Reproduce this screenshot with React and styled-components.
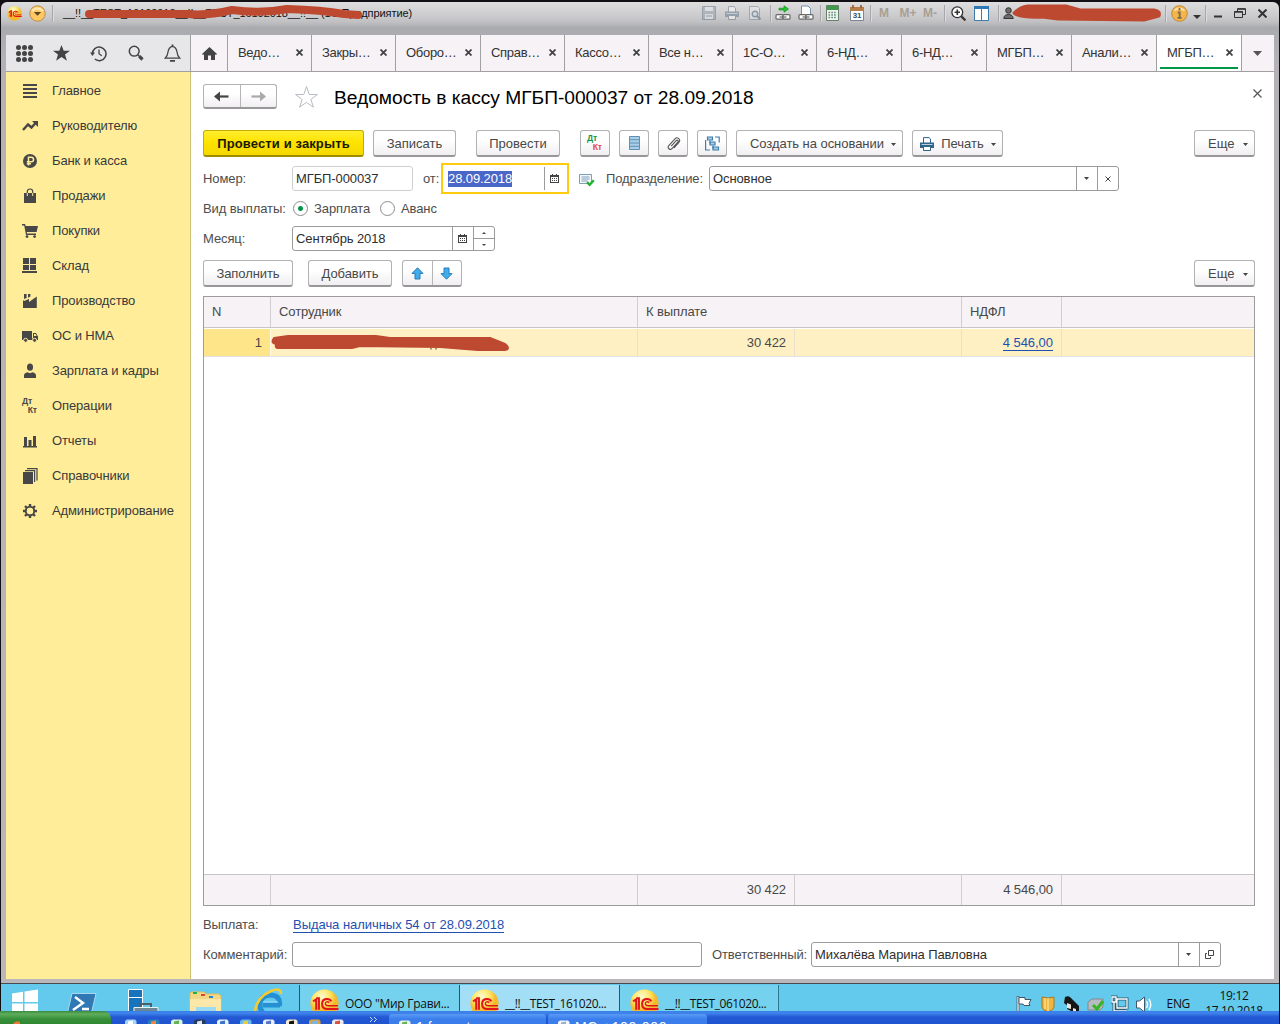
import React from 'react';
import styled, { createGlobalStyle, css } from 'styled-components';

const Global = createGlobalStyle`
  * { box-sizing: border-box; }
  html, body { margin: 0; padding: 0; background: #000; overflow: hidden; }
  body { font: 13px/16px "Liberation Sans", Arial, sans-serif; letter-spacing: -0.1px; color: #404040; }
  svg { display: block; flex: none; }
`;

const Screen = styled.div`
  width: 1280px;
  height: 1024px;
  padding: 2px 1px 0 1px;
  display: flex;
  flex-direction: column;
  overflow: hidden;
  background: #121014;
`;

const Window = styled.div`
  height: 982px;
  flex: none;
  padding: 0 5px 4px 5px;
  display: flex;
  flex-direction: column;
  border-radius: 6px 6px 0 0;
  background: linear-gradient(180deg, #dededf 0, #cbcbcd 14px, #c0c0c3 20px, #a9aaad 26px, #acadb1 33px, #b4b2b6 60px, #b9b7ba 100%);
  border-bottom: 1px solid #4a4a4e;
`;

const TitleBar = styled.header`
  position: relative;
  height: 33px;
  flex: none;
  display: flex;
  align-items: flex-start;
  font-size: 11px;
  letter-spacing: -0.07px;
  color: #111;
`;

const TitleText = styled.span`
  width: 634px;
  margin-left: 10px;
  padding-top: 3px;
  flex: none;
  white-space: pre;
`;

const TitleGroup = styled.div`
  height: 22px;
  display: flex;
  align-items: center;
`;

const Slot = styled.span`
  width: ${p => p.$w}px;
  height: 22px;
  flex: none;
  display: flex;
  align-items: center;
  justify-content: center;
  opacity: ${p => (p.$dim ? 0.5 : 1)};
  font: bold 12px "Liberation Sans", Arial, sans-serif;
  color: #a89f94;
`;

const Sep = styled.i`
  width: 1px;
  height: 17px;
  flex: none;
  background: #a7a7ab;
  box-shadow: 1px 0 0 #dcdcde;
`;

const Scribble = styled.svg`
  position: absolute;
  left: ${p => p.$x}px;
  top: ${p => p.$y}px;
  pointer-events: none;
`;

const Panel = styled.div`
  flex: 1;
  min-height: 0;
  display: flex;
  flex-direction: column;
  background: #fff;
`;

const TopBar = styled.nav`
  height: 37px;
  flex: none;
  display: flex;
  background: #f6f2f6;
  border-bottom: 1px solid #a0a0a0;
`;

const Tools = styled.div`
  width: 185px;
  flex: none;
  display: flex;
  align-items: center;
  background: #e7e7e9;
  border-right: 1px solid #a0a0a0;
`;

const Tool = styled.span`
  width: 37px;
  flex: none;
  display: flex;
  justify-content: center;
`;

const HomeTab = styled.div`
  width: 36px;
  flex: none;
  display: flex;
  align-items: center;
  justify-content: center;
`;

const Tab = styled.div`
  width: ${p => p.$w}px;
  flex: none;
  padding: 0 8px 1px 10px;
  display: flex;
  align-items: center;
  justify-content: space-between;
  border-left: 1px solid #a0a0a0;
  letter-spacing: -0.3px;
  color: #333;
  ${p => p.$active && css`
    background: linear-gradient(#009646, #009646) 3px 32px / 78px 2px no-repeat #fff;
  `}
`;

const MoreTabs = styled.div`
  flex: 1;
  padding-right: 2px;
  display: flex;
  align-items: center;
  justify-content: center;
  border-left: 1px solid #a0a0a0;
`;

const Body = styled.div`
  flex: 1;
  min-height: 0;
  display: flex;
`;

const Sidebar = styled.aside`
  width: 185px;
  flex: none;
  padding-top: 1px;
  background: #ffed9a;
  border-right: 1px solid #cdc178;
`;

const NavItem = styled.div`
  height: 35px;
  padding-left: 14px;
  display: grid;
  grid-template-columns: 20px 1fr;
  column-gap: 12px;
  align-items: center;
  justify-items: start;
  letter-spacing: -0.13px;
  color: #3a3a3a;
  white-space: nowrap;
  svg { justify-self: center; }
`;

const Page = styled.main`
  flex: 1;
  padding: 12px 19px 0 12px;
  display: flex;
  flex-direction: column;
`;

const HeadRow = styled.div`
  height: 25px;
  flex: none;
  display: flex;
  align-items: center;
`;

const StarButton = styled.span`
  margin-left: 17px;
`;

const Title = styled.h1`
  flex: 1;
  margin: 0 0 0 15px;
  padding-top: 2px;
  font-size: 19.2px;
  line-height: 24px;
  font-weight: 400;
  letter-spacing: -0.02px;
  color: #000;
`;

const CloseBox = styled.span`
  margin: -6px -7px 0 0;
`;

const Row = styled.div`
  height: ${p => p.$h}px;
  margin-top: ${p => p.$mt || 0}px;
  flex: none;
  display: flex;
  align-items: center;
`;

const raised = css`
  border: 1px solid #b2b2b2;
  border-bottom: 2px solid #979797;
  border-radius: 3px;
  background: linear-gradient(#fff 40%, #f1eef1);
`;

const Button = styled.button`
  ${raised}
  width: ${p => p.$w}px;
  height: 27px;
  margin: 0 0 0 ${p => p.$ml || 0}px;
  padding: ${p => (p.$menu ? `2px 6px 0 ${p.$pl || 13}px` : p.$icon ? '0' : '2px 0 0')};
  flex: none;
  display: flex;
  align-items: center;
  justify-content: ${p => (p.$menu ? 'space-between' : 'center')};
  font: 13px/16px "Liberation Sans", Arial, sans-serif;
  letter-spacing: ${p => p.$ls || 0}px;
  color: #484848;
  white-space: nowrap;
  ${p => p.$primary && css`
    font-weight: 700;
    letter-spacing: 0.12px;
    color: #1a1a00;
    border-color: #c3ab00;
    border-bottom-color: #a08c00;
    background: linear-gradient(#ffee30, #ffe300 45%, #f5d800);
  `}
`;

const Pair = styled.div`
  ${raised}
  width: ${p => p.$w}px;
  height: ${p => p.$h}px;
  margin-left: ${p => p.$ml || 0}px;
  flex: none;
  display: flex;
`;

const Half = styled.span`
  flex: 1;
  display: flex;
  align-items: center;
  justify-content: center;
  & + & { border-left: 1px solid #b5b5b5; }
`;

const Spacer = styled.span`
  flex: 1;
`;

const Label = styled.label`
  width: ${p => p.$w}px;
  margin-left: ${p => p.$ml || 0}px;
  flex: none;
  white-space: nowrap;
  color: #4d4d4d;
`;

const Field = styled.div`
  width: ${p => p.$w}px;
  height: 25px;
  flex: none;
  display: flex;
  align-items: stretch;
  border: 1px solid ${p => (p.$soft ? '#cfcfcf' : '#9b9b9b')};
  border-radius: 3px;
  background: #fff;
  color: #2e2e2e;
`;

const Value = styled.span`
  flex: 1;
  padding: 0 3px;
  display: flex;
  align-items: center;
  white-space: nowrap;
`;

const FieldBtn = styled.span`
  width: ${p => p.$w || 21}px;
  padding-right: 1px;
  display: flex;
  align-items: center;
  justify-content: center;
  border-left: 1px solid #9b9b9b;
`;

const Spin = styled.span`
  width: 21px;
  display: flex;
  flex-direction: column;
  border-left: 1px solid #9b9b9b;
`;

const SpinHalf = styled.span`
  flex: 1;
  display: flex;
  align-items: center;
  justify-content: center;
  & + & { border-top: 1px solid #9b9b9b; }
`;

const FocusField = styled.div`
  width: 128px;
  height: 31px;
  flex: none;
  padding: 2px 3px 2px 5px;
  display: flex;
  align-items: stretch;
  border: 2px solid #ffcb0f;
  background: #fff;
`;

const Selected = styled.span`
  height: 16px;
  margin-top: 4px;
  line-height: 15px;
  background: #4a67c8;
  color: #fff;
  letter-spacing: -0.1px;
`;

const Status = styled.span`
  margin: 2px 11px 0 10px;
`;

const Radio = styled.span`
  width: 15px;
  height: 15px;
  margin-right: 6px;
  flex: none;
  border: 1px solid #8c8c8c;
  border-radius: 50%;
  background: ${p => (p.$on ? 'radial-gradient(circle, #009646 2px, #fff 3px)' : '#fff')};
`;

const Table = styled.section`
  position: relative;
  height: 610px;
  margin-top: 9px;
  flex: none;
  display: flex;
  flex-direction: column;
  border: 1px solid #9c9c9c;
  background: #fff;
`;

const TRow = styled.div`
  height: ${p => p.$h}px;
  flex: none;
  display: grid;
  grid-template-columns: ${p => (p.$kind === 'head' ? '67px 367px 324px 100px 1fr' : '67px 367px 157px 167px 100px 1fr')};
  ${p => p.$kind === 'head' && css`background: #f6f2f6; border-bottom: 1px solid #c6c6c6;`}
  ${p => p.$kind === 'row' && css`background: #fff0c4; border-top: 1px solid #fff; border-bottom: 1px solid #e2e2e4;`}
  ${p => p.$kind === 'foot' && css`background: #f6f2f6; border-top: 1px solid #c6c6c6;`}
`;

const Cell = styled.div`
  padding: 0 8px;
  display: flex;
  align-items: center;
  justify-content: ${p => (p.$right ? 'flex-end' : 'flex-start')};
  border-right: 1px solid ${p => (p.$tone || '#d0ced0')};
  background: ${p => p.$bg || 'transparent'};
  color: #484848;
  &:last-child { border-right: 0; }
`;

const Link = styled.a`
  margin-top: ${p => p.$mt || 0}px;
  color: #1d50b0;
  border-bottom: 1px solid #1d50b0;
  line-height: 14px;
  letter-spacing: -0.04px;
  white-space: nowrap;
`;

const WinBar = styled.footer`
  height: 27px;
  flex: none;
  padding-top: 1px;
  display: flex;
  overflow: hidden;
  background: #63caee;
`;

const Pinned = styled.div`
  width: 298px;
  flex: none;
  display: flex;
`;

const Pin = styled.span`
  width: ${p => p.$w}px;
  height: 26px;
  overflow: hidden;
`;

const Task = styled.div`
  width: 160px;
  height: 26px;
  flex: none;
  padding: 4px 0 0 10px;
  display: flex;
  align-items: flex-start;
  overflow: hidden;
  border-left: 1px solid #24586a;
  background: ${p => (p.$active ? '#a2dff7' : '#74d2ee')};
  color: #111;
  font: 12px/30px "Open Sans", "Noto Sans", sans-serif;
  letter-spacing: ${p => p.$ls || 0}px;
  white-space: nowrap;
  span { margin-left: 6px; }
  &:last-of-type { border-right: 1px solid #2d7890; }
`;

const Tasks = styled.div`
  display: flex;
`;

const Tray = styled.div`
  margin-left: auto;
  padding: 10px 0 0 0;
  display: flex;
  align-items: flex-start;
  gap: 6px;
  color: #111;
  font: 12px/16px "Open Sans", "Noto Sans", sans-serif;
  letter-spacing: -0.35px;
`;

const Lang = styled.span`
  margin: 1px -1px 0 8px;
`;

const Clock = styled.div`
  width: 90px;
  margin: -7px 0 0 -6px;
  line-height: 15px;
  text-align: center;
`;

const XpBar = styled.footer`
  height: 13px;
  flex: none;
  margin-left: -1px;
  display: flex;
  overflow: hidden;
  background: linear-gradient(#3a7ce8 0, #3f86ec 2px, #2459d4 6px, #1f53cf 13px);
`;

const Start = styled.div`
  width: 111px;
  height: 13px;
  padding: 9px 0 0 12px;
  border-radius: 0 8px 0 0;
  background: linear-gradient(#3b8a3e, #5fae5c 3px, #378f39 8px, #2f8732);
`;

const Quick = styled.div`
  width: 278px;
  padding-left: 13px;
  display: flex;
  gap: 10px;
`;

const More = styled.span`
  margin: 5px 0 0 15px;
`;

const XpTask = styled.div`
  width: ${p => p.$w}px;
  margin: 3px 2px 0 0;
  padding: 5px 0 0 9px;
  display: flex;
  gap: 5px;
  border-radius: 3px 3px 0 0;
  background: linear-gradient(#5a9bf5, #3b7eeb 5px);
  color: #fff;
  font: 14px/16px "Liberation Sans", Arial, sans-serif;
  letter-spacing: ${p => p.$ls || 0}px;
  white-space: pre;
  overflow: hidden;
  svg { margin-top: -7px; }
`;

const RED = '#bd4930';
const INK = '#474747';

const Cross = ({ s = 7, w = 2, c = '#444' }) => (
  <svg width={s} height={s} viewBox={`0 0 ${s} ${s}`} stroke={c} strokeWidth={w}>
    <path d={`M.5 .5L${s - 0.5} ${s - 0.5}M${s - 0.5} .5L.5 ${s - 0.5}`} />
  </svg>
);

const Caret = ({ w = 5, h = 3, up, c = '#444' }) => (
  <svg width={w} height={h} viewBox="0 0 6 3" preserveAspectRatio="none" fill={c}>
    <path d={up ? 'M0 3L3 0L6 3Z' : 'M0 0L3 3L6 0Z'} />
  </svg>
);

const Arrow = ({ c, flip }) => (
  <svg width="15" height="11" viewBox="0 0 15 11" fill="none" stroke={c} strokeWidth="2.2" transform={flip ? 'scale(-1 1)' : undefined}>
    <path d="M1.5 5.5H14.5" />
    <path d="M0 5.5L6 .5V10.5Z" fill={c} stroke="none" />
  </svg>
);

const Calendar = () => (
  <svg width="9" height="9" viewBox="0 0 9 9" fill="#444">
    <path d="M0 1H9V9H0Z" />
    <path d="M2 0H3V2H2ZM6 0H7V2H6Z" />
    <path fill="#fff" d="M1 3H8V8H1Z" />
    <path d="M2 4H3V5H2ZM4 4H5V5H4ZM6 4H7V5H6ZM2 6H3V7H2ZM4 6H5V7H4ZM6 6H7V7H6Z" />
  </svg>
);

const BlueArrow = ({ down }) => (
  <svg width="13" height="13" viewBox="0 0 13 13" transform={down ? 'rotate(180)' : undefined}>
    <path d="M6.5 .8L12 6.4H9V12H4V6.4H1Z" fill="#42adea" stroke="#257db8" />
  </svg>
);

const OneC = ({ s = 16 }) => (
  <svg width={s} height={s} viewBox="0 0 28 28">
    <defs>
      <radialGradient id="onec" cx="40%" cy="25%">
        <stop offset="0" stopColor="#fffbd0" />
        <stop offset=".6" stopColor="#ffe765" />
        <stop offset="1" stopColor="#f4b92c" />
      </radialGradient>
    </defs>
    <circle cx="14" cy="14" r="13.6" fill="url(#onec)" />
    <g fill="none" stroke="#e0161b" strokeWidth="2">
      <path d="M3 12L6 10V20M8.6 20V9H6" />
      <path d="M20.5 12C19 8.8 12 8.6 11.7 14C11.5 18.3 14 19.3 17 19.3H27.5" />
      <path d="M18.6 13.2C17 11.8 14.9 12.2 14.8 14.1C14.8 16 16 16.2 18 16.2H27" strokeWidth="1.3" />
    </g>
  </svg>
);

const Nav = ({ children }) => (
  <svg width="16" height="16" viewBox="0 0 16 16" fill={INK}>{children}</svg>
);

const DtKt = ({ a, b }) => (
  <svg width="18" height="18" viewBox="0 0 18 18" fontFamily="Liberation Sans, Arial, sans-serif" fontWeight="700" fontSize="8.6" letterSpacing="-.2">
    <text x="1" y="7" fill={a}>Дт</text>
    <text x="6.8" y="16.2" fill={b}>Кт</text>
  </svg>
);

const navItems = [
  ['Главное', <Nav><path d="M1 1h14v2H1zM1 5h14v2H1zM1 9h14v2H1zM1 13h14v2H1z" /></Nav>],
  ['Руководителю', <Nav><path d="M1 12L6 6.5L9.5 9.5L14 4.5" fill="none" stroke={INK} strokeWidth="2.4" /><path d="M10 3h6v6z" /></Nav>],
  ['Банк и касса', <Nav><circle cx="8" cy="8" r="7" /><path d="M6.5 12.5V4.2H9.3a2.2 2.2 0 0 1 0 4.5H4.8M4.8 10.7H9" fill="none" stroke="#ffed9a" strokeWidth="1.5" /></Nav>],
  ['Продажи', <Nav><path d="M2 5h12v10H2z" /><path d="M5.3 8V3.5q0-2.5 2.7-2.5t2.7 2.5V8" fill="none" stroke={INK} strokeWidth="1.2" /><path d="M5.3 5V8M10.7 5V8" stroke="#ffed9a" strokeWidth="1" /></Nav>],
  ['Покупки', <Nav><path d="M0 1h3l.7 2H16l-1.4 6H4.8L5 10.5h9V12H4L2.2 2.4H0z" /><circle cx="5" cy="13.6" r="1.4" /><circle cx="12.6" cy="13.6" r="1.4" /></Nav>],
  ['Склад', <Nav><path d="M1 0h6v6H1zM8 0h6v6H8zM1 7h6v5H1zM8 7h6v5H8zM0 13h15v2H0z" /></Nav>],
  ['Производство', <Nav><path d="M1 15V8l1-1v1l5-2v3l7.8-5.5V15zM2 1h2.6v4L2 6zM6 1h2.4v2.5L6 4.8z" /></Nav>],
  ['ОС и НМА', <Nav><path d="M0 3h10v9H0zM11 5h3l2 3.4V12h-5z" /><path d="M12 6h1.600l1 2H12z" fill="#ffed9a" /><path d="M9 10.500h3V12H9z" /><circle cx="3.600" cy="12.300" r="2" stroke="#ffed9a" /><circle cx="12.600" cy="12.300" r="2" stroke="#ffed9a" /></Nav>],
  ['Зарплата и кадры', <Nav><ellipse cx="8" cy="4.2" rx="3" ry="3.6" /><path d="M2 15v-2.5Q2 10 5.5 9.3L8 10.2L10.5 9.3Q14 10 14 12.5V15z" /></Nav>],
  ['Операции', <DtKt a={INK} b={INK} />],
  ['Отчеты', <Nav><path d="M1 13h14v1.6H1zM2 4h3v10H2zM6.5 7h3v7h-3zM11 3h3v11h-3z" /></Nav>],
  ['Справочники', <Nav><path d="M1 4h10v12H1z" /><path d="M3 2.6h9.6V14M5 .6h10v12" fill="none" stroke={INK} strokeWidth="1.2" /></Nav>],
  ['Администрирование', (
    <Nav>
      <circle cx="8" cy="8" r="4.2" fill="none" stroke={INK} strokeWidth="2" />
      <g stroke={INK} strokeWidth="2.4"><path d="M8 1v3M8 12v3M1 8h3M12 8h3M3 3l2 2M11 11l2 2M13 3l-2 2M5 11l-2 2" /></g>
      <circle cx="8" cy="8" r="3.2" fill="#ffed9a" />
    </Nav>
  )],
];

const tabs = [
  ['Ведо…', 84], ['Закры…', 84], ['Оборо…', 85], ['Справ…', 84], ['Кассо…', 84], ['Все н…', 84],
  ['1С-О…', 84], ['6-НД…', 85], ['6-НД…', 85], ['МГБП…', 85], ['Анали…', 85], ['МГБП…', 85],
];

const Floppy = () => (
  <svg width="14" height="14" viewBox="0 0 14 14"><path d="M.5.5h13v13H.5z" fill="#8c9aa8" stroke="#5d7184" /><path d="M3 1h8v4H3zM3 8h8v5H3z" fill="#e4e8ec" /><path d="M4 10h6" stroke="#5d7184" /></svg>
);
const Printer = ({ c = '#5f7386', s = 14 }) => (
  <svg width={s} height={s} viewBox="0 0 14 14"><path d="M3.5 6V.6H9L10.5 2V6" fill="#fff" stroke={c} /><path d="M0 5.5h14v5.5H0z" fill={c} /><path d="M1.5 7.5h11" stroke="#b8d0e0" /><path d="M3.5 9.5h7v4h-7z" fill="#fff" stroke={c} /></svg>
);
const Preview = () => (
  <svg width="14" height="14" viewBox="0 0 14 14"><path d="M1.5.5h8l2 2v11h-10z" fill="#e8ecef" stroke="#71808e" /><circle cx="7" cy="8" r="2.8" fill="#cfe2ee" stroke="#4f6172" strokeWidth="1.4" /><path d="M9 10l3.5 3.5" stroke="#4f6172" strokeWidth="2" /></svg>
);
const Chain = ({ page }) => (
  <svg width="16" height="16" viewBox="0 0 16 16">
    {page
      ? <path d="M3.5 9V1H10l2.5 2.5V9" fill="#fff" stroke="#7590a8" />
      : <path d="M4 3.2h5V.8L13.5 4L9 7.2V5H4z" fill="#25c631" stroke="#128a1e" strokeWidth=".7" />}
    <g fill="#fff" stroke="#666" strokeWidth="1.2"><rect x="1" y="9.600" width="7" height="4.600" rx="1" /><rect x="8" y="9.600" width="7" height="4.600" rx="1" /><path d="M4.500 12h7" /></g>
  </svg>
);
const Calc = () => (
  <svg width="13" height="16" viewBox="0 0 13 16"><path d="M.5.5h12v15H.5z" fill="#f1f5f1" stroke="#66806a" /><path d="M1 1h11v4H1z" fill="#3f9a49" /><path d="M2.5 7.5h8.5M2.5 10h8.5M2.5 12.5h8.5" stroke="#5f8a78" strokeWidth="1.3" strokeDasharray="1.6 1.2" /></svg>
);
const Cal31 = () => (
  <svg width="14" height="16" viewBox="0 0 14 16"><path d="M.5 2.5h13v13H.5z" fill="#fff" stroke="#7b8792" /><path d="M0 2h14v4H0z" fill="#b67c4a" /><path d="M3 0v3M11 0v3" stroke="#8b5a33" strokeWidth="1.6" /><text x="2.8" y="13.4" fontSize="8" fontFamily="Liberation Sans, sans-serif" fontWeight="700" fill="#35506b" letterSpacing="-.3">31</text></svg>
);
const Magnify = () => (
  <svg width="15" height="15" viewBox="0 0 15 15" fill="none" stroke="#333"><circle cx="6.3" cy="6.3" r="5.4" fill="#fff" strokeWidth="1.3" /><path d="M3.6 6.3h5.4M6.3 3.6v5.4" strokeWidth="1.6" /><path d="M10.4 10.4l4 4" strokeWidth="2.2" /></svg>
);
const Columns = () => (
  <svg width="15" height="15" viewBox="0 0 15 15"><path d="M.5.5h14v14H.5z" fill="#fff" stroke="#417ba8" /><path d="M0 0h15v3H0z" fill="#2e78b6" /><path d="M7.5 2v12" stroke="#417ba8" /></svg>
);

const TitleIcons = () => (
  <TitleGroup>
    <Slot $w={23} $dim><Floppy /></Slot>
    <Slot $w={23} $dim><Printer /></Slot>
    <Slot $w={23} $dim><Preview /></Slot>
    <Slot $w={4} />
    <Sep />
    <Slot $w={24}><Chain /></Slot>
    <Slot $w={22}><Chain page /></Slot>
    <Slot $w={3} />
    <Sep />
    <Slot $w={22}><Calc /></Slot>
    <Slot $w={27}><Cal31 /></Slot>
    <Sep />
    <Slot $w={26}>M</Slot>
    <Slot $w={22}>M+</Slot>
    <Slot $w={22}>M-</Slot>
    <Slot $w={3} />
    <Sep />
    <Slot $w={26}><Magnify /></Slot>
    <Slot $w={21}><Columns /></Slot>
    <Slot $w={6} />
    <Sep />
    <Slot $w={18}>
      <svg width="11" height="13" viewBox="0 0 11 13" fill="#6b6b6b" stroke="#333"><circle cx="5.5" cy="3.5" r="2.8" /><path d="M.8 11.5Q1 7.5 5.5 7.5T10.2 11.5Z" /></svg>
    </Slot>
    <Slot $w={148} />
    <Sep />
    <Slot $w={26}>
      <svg width="17" height="17" viewBox="0 0 17 17"><circle cx="8.5" cy="8.5" r="7.8" fill="#f5b548" stroke="#c08a35" /><path d="M3.500 5.500Q8 1.500 13.500 5.500" stroke="#ffe2a6" strokeWidth="2" fill="none" /><path d="M8.500 3v2.200M6.800 7.500h1.900V12.600M6.500 12.800h4.200" stroke="#7b6a5a" strokeWidth="1.800" fill="none" /></svg>
    </Slot>
    <Slot $w={10}><svg width="8" height="12" viewBox="0 0 8 12" fill="#333"><path d="M0 8h8L4 12z" /></svg></Slot>
    <Slot $w={3} />
    <Sep />
    <Slot $w={24}><svg width="8" height="10" viewBox="0 0 8 10"><path d="M0 8.5h8" stroke="#333" strokeWidth="2" /></svg></Slot>
    <Slot $w={20}>
      <svg width="12" height="10" viewBox="0 0 12 10" fill="none" stroke="#333"><path d="M3.5 3V.8H11.5V6.5H9" /><path d="M.5 3.5h8v6h-8z" /><path d="M.5 4h8M3.5 1h8" strokeWidth="1.4" /></svg>
    </Slot>
    <Slot $w={24}><Cross s={9} w={2} c="#333" /></Slot>
  </TitleGroup>
);

const XpIcon = ({ a, b }) => (
  <svg width="13" height="13" viewBox="0 0 13 13"><path d="M1 13V10L3 8.500h8l1.500 1.500v3z" fill={a} /><path d="M4 13v-2.500l5-1V13z" fill={b} /></svg>
);

export default function App() {
  return (
    <Screen>
      <Global />
      <Window>
        <TitleBar>
          <TitleGroup>
            <Slot $w={17}><OneC s={15} /></Slot>
            <Slot $w={29}>
              <svg width="17" height="17" viewBox="0 0 17 17"><circle cx="8.5" cy="8.5" r="7.7" fill="#ffc862" stroke="#b98d46" /><path d="M3 6Q8 1 14 6" stroke="#ffe6b0" strokeWidth="2.2" fill="none" /><path d="M4.8 7h7.4L8.5 10.8z" fill="#5c4526" /></svg>
            </Slot>
            <Sep />
          </TitleGroup>
          <TitleText>__!!__TEST_16102018__!!__TEST_16102018__!!__ (1С:Предприятие)</TitleText>
          <TitleIcons />
          <Scribble $x={76} $y={2} width="284" height="20" viewBox="0 0 284 20">
            <path d="M7 10H106Q125 12 150 6Q180 10 205 5Q240 6 262 10L276 11" fill="none" stroke={RED} strokeWidth="8" strokeLinecap="round" strokeLinejoin="round" />
          </Scribble>
          <Scribble $x={1002} $y={1} width="156" height="22" viewBox="0 0 156 22">
            <path d="M6 10Q12 4 20 3H58L72 7H146Q153 8 151 13L136 17L50 16L34 14Q12 15 6 10Z" fill={RED} stroke={RED} strokeWidth="3" strokeLinejoin="round" />
          </Scribble>
        </TitleBar>

        <Panel>
          <TopBar>
            <Tools>
              <Tool>
                <svg width="17" height="17" viewBox="0 0 17 17" fill="#444">
                  {[2.5, 8.5, 14.5].map(y => [2.5, 8.5, 14.5].map(x => <circle key={`${x}-${y}`} cx={x} cy={y} r="2.5" />))}
                </svg>
              </Tool>
              <Tool><svg width="17" height="16" viewBox="0 0 17 16" fill="#444"><path d="M8.5 0l2.2 5.7H17l-5 3.8 1.9 6.3-5.4-3.8-5.4 3.8L5 9.5 0 5.7h6.3z" /></svg></Tool>
              <Tool>
                <svg width="17" height="17" viewBox="0 0 17 17" fill="none" stroke="#444" strokeWidth="1.5"><path d="M2.4 9a6.8 6.8 0 1 1 2.4 5" /><path d="M0 7.5h5L2.5 11z" fill="#444" stroke="none" /><path d="M9 4.5v4.2l2.8 2" strokeWidth="1.3" /></svg>
              </Tool>
              <Tool>
                <svg width="16" height="16" viewBox="0 0 16 16" fill="none" stroke="#444"><circle cx="6.2" cy="6.2" r="4.9" strokeWidth="1.5" /><path d="M9.8 9.8l1.5 1.5" strokeWidth="1.5" /><path d="M11.2 11.2l3.3 3.3" strokeWidth="3.2" /></svg>
              </Tool>
              <Tool>
                <svg width="17" height="18" viewBox="0 0 17 18" fill="none" stroke="#444" strokeWidth="1.3"><path d="M1.2 14.2Q3.6 12 4 8Q4.6 3.2 8.5 2.3Q12.400 3.2 13 8Q13.4 12 15.8 14.2Z" /><path d="M8.5 0.5v2M6 16.8h5" strokeWidth="1.8" /></svg>
              </Tool>
            </Tools>
            <HomeTab>
              <svg width="15" height="13" viewBox="0 0 15 13" fill="#444"><path d="M7.5 0L15 7l-1 1.1-1-.8V13H9V8.5H6V13H2V7.3l-1 .8L0 7z" /></svg>
            </HomeTab>
            {tabs.map(([name, w], i) => (
              <Tab key={i} $w={w} $active={i === tabs.length - 1}>
                {name}
                <Cross s={7} w={1.8} />
              </Tab>
            ))}
            <MoreTabs><Caret w={9} h={5} c="#555" /></MoreTabs>
          </TopBar>

          <Body>
            <Sidebar>
              {navItems.map(([name, icon]) => (
                <NavItem key={name}>{icon}<span>{name}</span></NavItem>
              ))}
            </Sidebar>

            <Page>
              <HeadRow>
                <Pair $w={74} $h={25}>
                  <Half><Arrow c="#444" /></Half>
                  <Half><Arrow c="#aaa" flip /></Half>
                </Pair>
                <StarButton>
                  <svg width="25" height="24" viewBox="0 0 25 24" fill="none" stroke="#b8bcc4">
                    <path d="M12.5 1.500l2.7 8h8.3l-6.6 4.9 2.5 7.8-6.9-4.8-6.9 4.8 2.5-7.8-6.6-4.9h8.3z" />
                  </svg>
                </StarButton>
                <Title>Ведомость в кассу МГБП-000037 от 28.09.2018</Title>
                <CloseBox><Cross s={9} w={1.2} c="#555" /></CloseBox>
              </HeadRow>

              <Row $h={27} $mt={21}>
                <Button $w={161} $primary>Провести и закрыть</Button>
                <Button $w={83} $ml={9}>Записать</Button>
                <Button $w={84} $ml={20}>Провести</Button>
                <Button $w={30} $ml={20} $icon><DtKt a="#0b9a4a" b="#e04a4a" /></Button>
                <Button $w={30} $ml={9} $icon>
                  <svg width="11" height="14" viewBox="0 0 11 14"><path d="M.5.5h10v13H.5z" fill="#a9cfe8" stroke="#5e8fb4" /><path d="M0 3.7h11M0 7h11M0 10.3h11" stroke="#5e8fb4" /></svg>
                </Button>
                <Button $w={30} $ml={9} $icon>
                  <svg width="15" height="15" viewBox="0 0 15 15" fill="none" stroke="#555" strokeWidth="1.1"><path d="M5.200 10.200L10.200 4.600a1.100 1.100 0 0 1 1.700 1.500L6 12.600a2.100 2.100 0 0 1-3.200-2.900L9 2.800a2.600 2.600 0 0 1 3.900 3.500L8 12" /></svg>
                </Button>
                <Button $w={30} $ml={9} $icon>
                  <svg width="15" height="15" viewBox="0 0 15 15" fill="#a9cfe8" stroke="#3f7dab" strokeWidth="1.2"><path d="M2.5 1h5v3h-5zM5 6h5v3H5zM8 11h5.5v3H8z" /><path d="M.6 4V14H5M10 1h4.2v5.5M5 4.5V7.5M8 9.5v3" fill="none" /></svg>
                </Button>
                <Button $w={167} $ml={9} $menu $ls={-0.05}>Создать на основании<Caret /></Button>
                <Button $w={91} $ml={9} $menu $pl={7}><Printer c="#2f6488" s={14} /><span>Печать</span><Caret /></Button>
                <Spacer />
                <Button $w={61} $menu>Еще<Caret /></Button>
              </Row>

              <Row $h={31} $mt={6}>
                <Label $w={89}>Номер:</Label>
                <Field $w={121} $soft><Value>МГБП-000037</Value></Field>
                <Label $w={18} $ml={10}>от:</Label>
                <FocusField>
                  <Selected>28.09.2018</Selected>
                  <Spacer />
                  <FieldBtn $w={20}><Calendar /></FieldBtn>
                </FocusField>
                <Status>
                  <svg width="16" height="14" viewBox="0 0 16 14">
                    <path d="M.5 1.5h12v9H.5z" fill="#f4f8fb" stroke="#7f9fb8" /><path d="M2.5 4h8M2.5 6h8M2.5 8h6" stroke="#7f9fb8" /><path d="M8 9.2l2.6 2.6 4.2-4.6" fill="none" stroke="#20b030" strokeWidth="2.4" />
                  </svg>
                </Status>
                <Label $w={103}>Подразделение:</Label>
                <Field $w={410}>
                  <Value>Основное</Value>
                  <FieldBtn><Caret /></FieldBtn>
                  <FieldBtn><Cross s={6} w={1} /></FieldBtn>
                </Field>
              </Row>

              <Row $h={29}>
                <Label $w={90}>Вид выплаты:</Label>
                <Radio $on />
                <Label $w={66}>Зарплата</Label>
                <Radio />
                <Label $w={50}>Аванс</Label>
              </Row>

              <Row $h={31}>
                <Label $w={89}>Месяц:</Label>
                <Field $w={203}>
                  <Value>Сентябрь 2018</Value>
                  <FieldBtn><Calendar /></FieldBtn>
                  <Spin>
                    <SpinHalf><Caret w={4} h={2} up /></SpinHalf>
                    <SpinHalf><Caret w={4} h={2} /></SpinHalf>
                  </Spin>
                </Field>
              </Row>

              <Row $h={27} $mt={6}>
                <Button $w={90} $ls={-0.08}>Заполнить</Button>
                <Button $w={84} $ml={15} $ls={-0.08}>Добавить</Button>
                <Pair $w={60} $h={27} $ml={10}>
                  <Half><BlueArrow /></Half>
                  <Half><BlueArrow down /></Half>
                </Pair>
                <Spacer />
                <Button $w={61} $menu>Еще<Caret /></Button>
              </Row>

              <Table>
                <TRow $h={31} $kind="head">
                  <Cell>N</Cell>
                  <Cell>Сотрудник</Cell>
                  <Cell>К выплате</Cell>
                  <Cell>НДФЛ</Cell>
                  <Cell />
                </TRow>
                <TRow $h={29} $kind="row">
                  <Cell $right $bg="#ffe58a" $tone="#fff8e2">1</Cell>
                  <Cell $tone="#e8e0cc" />
                  <Cell $tone="#e8e0cc" $right>30 422</Cell>
                  <Cell $tone="#e8e0cc" />
                  <Cell $tone="#e8e0cc" $right><Link $mt={1}>4 546,00</Link></Cell>
                  <Cell />
                </TRow>
                <Spacer />
                <TRow $h={31} $kind="foot">
                  <Cell />
                  <Cell />
                  <Cell $right>30 422</Cell>
                  <Cell />
                  <Cell $right>4 546,00</Cell>
                  <Cell />
                </TRow>
                <Scribble $x={66} $y={36} width="242" height="22" viewBox="0 0 242 22">
                  <path d="M4 5L18 3H106L120 5H220L235 11Q241 16 235 17H208L170 14L90 13L82 15H8Q5 15 6 11Q0 10 4 5Z" fill={RED} stroke={RED} strokeWidth="2" strokeLinejoin="round" />
                  <path d="M161 15v1.5M166 15v1.5" stroke="#333" />
                </Scribble>
              </Table>

              <Row $h={31} $mt={3}>
                <Label $w={90}>Выплата:</Label>
                <Link $mt={1}>Выдача наличных 54 от 28.09.2018</Link>
              </Row>
              <Row $h={27} $mt={1}>
                <Label $w={89}>Комментарий:</Label>
                <Field $w={410} />
                <Label $w={99} $ml={10}>Ответственный:</Label>
                <Field $w={410}>
                  <Value>Михалёва Марина Павловна</Value>
                  <FieldBtn><Caret /></FieldBtn>
                  <FieldBtn>
                    <svg width="9" height="9" viewBox="0 0 9 9" fill="none" stroke="#444"><path d="M3.5.5h5v5h-5z" /><path d="M2 3.5H.5v5h5V7" /></svg>
                  </FieldBtn>
                </Field>
              </Row>
            </Page>
          </Body>
        </Panel>
      </Window>

      <WinBar>
        <Pinned>
          <Pin $w={65}>
            <svg width="65" height="26" viewBox="0 0 65 26" fill="#fff"><path d="M11 8.5l11-1.700V17H11zM23.5 6.600L37 4.600V17H23.5zM11 18.500h11V28H11zM23.500 18.500H37V30H23.500z" /></svg>
          </Pin>
          <Pin $w={58}>
            <svg width="58" height="26" viewBox="0 0 58 26"><path d="M6 8.5h24L24 34H0z" fill="#2f78b4" stroke="#a8d8ee" /><path d="M9 12L17 18L7 25M16 24h7" fill="none" stroke="#fff" strokeWidth="2.400" /></svg>
          </Pin>
          <Pin $w={62}>
            <svg width="62" height="26" viewBox="0 0 62 26"><path d="M4.500 4.500h14v26h-14z" fill="#1674bd" stroke="#fff" /><path d="M4 12.500h15" stroke="#fff" /><path d="M10 22.500h24V30H10z" fill="#6e8794" stroke="#e8f2f6" /><path d="M16 22v-3h11v3" fill="none" stroke="#4c6069" strokeWidth="2" /></svg>
          </Pin>
          <Pin $w={63}>
            <svg width="63" height="26" viewBox="0 0 63 26"><path d="M4 9l1-2h13l2 2h13l2 2v20H4z" fill="#f2d787" stroke="#e6bd55" /><path d="M7 7h4v2H7z" fill="#27ae4b" /><path d="M15 9h4v2h-4z" fill="#d44a36" /><path d="M23 11h4v2h-4z" fill="#2f86d0" /><path d="M4 14h31v14H4z" fill="#fbe7a8" /><path d="M10 22h20v8H10z" fill="#9bdcf3" /></svg>
          </Pin>
          <Pin $w={48}>
            <svg width="48" height="26" viewBox="0 0 48 26"><path d="M31 20H14M30.500 21Q32 10 21 10Q11 11 11 20Q11 28 18 30" fill="none" stroke="#2591d4" strokeWidth="5" /><path d="M14 17H29" stroke="#9be0fa" strokeWidth="1.200" /><path d="M6 26Q8 12 22 6Q32 2 32 9" fill="none" stroke="#f4cb33" strokeWidth="2.600" /></svg>
          </Pin>
        </Pinned>
        <Tasks>
          <Task $ls={-0.28}><OneC s={29} /><span>ООО "Мир Грави...</span></Task>
          <Task $active $ls={-0.42}><OneC s={29} /><span>__!!__TEST_161020...</span></Task>
          <Task $ls={-0.42}><OneC s={29} /><span>__!!__TEST_061020...</span></Task>
        </Tasks>
        <Tray>
          <svg width="18" height="18" viewBox="0 0 18 18"><path d="M2 1.500h2V18H2z" fill="#fff" stroke="#456" strokeWidth=".8" /><path d="M4 2.500h6v2h6l-2 4 1 2H9l-1-1.500H4z" fill="#fff" stroke="#456" /></svg>
          <svg width="18" height="18" viewBox="0 0 18 18"><path d="M3 2l6 1 6-1v10q0 3-6 5-6-2-6-5z" fill="#f0b53f" stroke="#a87820" /><path d="M9 3v13M6 3v11" stroke="#fff0b0" /></svg>
          <svg width="18" height="18" viewBox="0 0 18 18"><path d="M2 2q4-2 6 1l8 8v5H8L4 14l1-3-4-3z" fill="#161616" /><path d="M4 8l4 1.500v4.500l-4-1zM10 13l3 1v2h-3z" fill="#e9e4dc" /></svg>
          <svg width="18" height="18" viewBox="0 0 18 18"><path d="M1 7l4-3h11v8l-3 3H1z" fill="#b8bcc0" stroke="#808890" /><path d="M6 10l4 4 6-8" fill="none" stroke="#37b528" strokeWidth="3" /></svg>
          <svg width="18" height="18" viewBox="0 0 18 18" fill="none"><path d="M6 4h10v9H6zM7 16h8M1 2h4v5H1zM3 7v9h4" stroke="#2d5b70" strokeWidth="3" /><path d="M6 4h10v9H6zM7 16h8M1 2h4v5H1zM3 7v9h4" stroke="#fff" strokeWidth="1.300" /></svg>
          <svg width="18" height="18" viewBox="0 0 18 18"><path d="M1.500 6h3l5-4v15l-5-4h-3z" fill="#fff" stroke="#456" /><path d="M11.500 6q2 3.500 0 7M14 4q3.500 5.500 0 11" fill="none" stroke="#fff" strokeWidth="1.400" /></svg>
          <Lang>ENG</Lang>
          <Clock>19:12<br />17.10.2018</Clock>
        </Tray>
      </WinBar>

      <XpBar>
        <Start><svg width="12" height="4" viewBox="0 0 12 4"><path d="M1 4Q3 0 8 2V4z" fill="#f07830" /></svg></Start>
        <Quick>
          <XpIcon a="#9fd4f8" b="#fff" />
          <XpIcon a="#2a7fc0" b="#e98a3a" />
          <XpIcon a="#dcefdc" b="#62b15a" />
          <XpIcon a="#283858" b="#dde6f2" />
          <XpIcon a="#e6f0fb" b="#3c74c4" />
          <XpIcon a="#68b8ee" b="#f0cb3d" />
          <XpIcon a="#e9eefa" b="#5676c8" />
          <XpIcon a="#f1ead0" b="#111" />
          <XpIcon a="#d9a441" b="#79b6e8" />
          <XpIcon a="#e9e9ee" b="#d85040" />
          <More><svg width="9" height="9" viewBox="0 0 9 9" fill="none" stroke="#cfe2ff"><path d="M1 1l2.500 2.500L1 6M5 1l2.500 2.500L5 6" /></svg></More>
        </Quick>
        <XpTask $w={157}><XpIcon a="#e9f3e4" b="#68b15a" /><span>1 f         t</span></XpTask>
        <XpTask $w={159} $ls={0.7}><XpIcon a="#f2f4f8" b="#9ab0c8" /><span>МС +100 000</span></XpTask>
      </XpBar>
    </Screen>
  );
}
